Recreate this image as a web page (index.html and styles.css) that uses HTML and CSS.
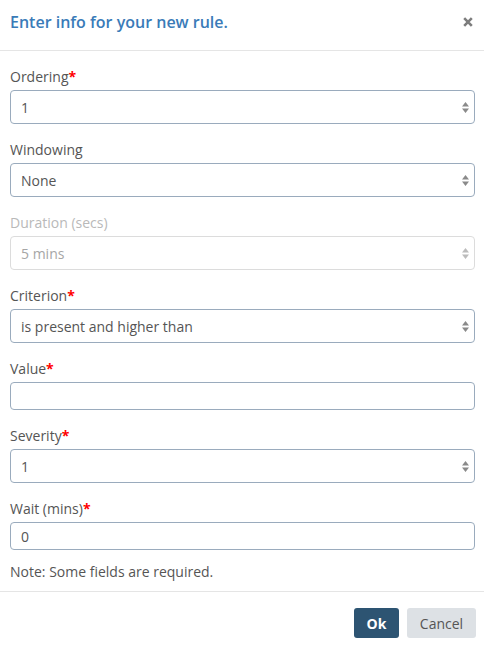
FILE: index.html
```html
<!DOCTYPE html>
<html>
<head>
<meta charset="utf-8">
<link rel="stylesheet" href="styles.css">
</head>
<body>
<div class="modal">
  <div class="modal-header">
    <h4 class="modal-title">Enter info for your new rule.</h4>
    <svg class="close" width="10" height="10" viewBox="0 0 10 10"><path d="M1.2 1.2 L8.8 8.8 M8.8 1.2 L1.2 8.8"/></svg>
  </div>
  <div class="modal-body">
    <div class="form-group">
      <label class="label">Ordering<span class="req">*</span></label>
      <div class="select-wrap">
        <select class="control select"><option>1</option></select>
        <svg class="arrows" width="7" height="11" viewBox="0 0 7 11"><path d="M3.5 0 L7 4.5 L0 4.5 Z M0 6.5 L7 6.5 L3.5 11 Z"/></svg>
      </div>
    </div>
    <div class="form-group">
      <label class="label">Windowing</label>
      <div class="select-wrap">
        <select class="control select"><option>None</option></select>
        <svg class="arrows" width="7" height="11" viewBox="0 0 7 11"><path d="M3.5 0 L7 4.5 L0 4.5 Z M0 6.5 L7 6.5 L3.5 11 Z"/></svg>
      </div>
    </div>
    <div class="form-group">
      <label class="label disabled">Duration (secs)</label>
      <div class="select-wrap disabled">
        <select class="control select" disabled><option>5 mins</option></select>
        <svg class="arrows" width="7" height="11" viewBox="0 0 7 11"><path d="M3.5 0 L7 4.5 L0 4.5 Z M0 6.5 L7 6.5 L3.5 11 Z"/></svg>
      </div>
    </div>
    <div class="form-group">
      <label class="label">Criterion<span class="req">*</span></label>
      <div class="select-wrap">
        <select class="control select"><option>is present and higher than</option></select>
        <svg class="arrows" width="7" height="11" viewBox="0 0 7 11"><path d="M3.5 0 L7 4.5 L0 4.5 Z M0 6.5 L7 6.5 L3.5 11 Z"/></svg>
      </div>
    </div>
    <div class="form-group">
      <label class="label">Value<span class="req">*</span></label>
      <input class="control text" type="text" value="">
    </div>
    <div class="form-group">
      <label class="label">Severity<span class="req">*</span></label>
      <div class="select-wrap">
        <select class="control select"><option>1</option></select>
        <svg class="arrows" width="7" height="11" viewBox="0 0 7 11"><path d="M3.5 0 L7 4.5 L0 4.5 Z M0 6.5 L7 6.5 L3.5 11 Z"/></svg>
      </div>
    </div>
    <div class="form-group last">
      <label class="label">Wait (mins)<span class="req">*</span></label>
      <input class="control text" type="text" value="0">
    </div>
    <p class="note">Note: Some fields are required.</p>
  </div>
  <div class="modal-footer">
    <button class="btn btn-primary">Ok</button>
    <button class="btn btn-default">Cancel</button>
  </div>
</div>
</body>
</html>
```

FILE: styles.css
```css
html, body {
  margin: 0;
  padding: 0;
  background: #ffffff;
}
body {
  font-family: "Open Sans", "Noto Sans", sans-serif;
  font-size: 14px;
  color: #555555;
  width: 484px;
}
.modal {
  width: 484px;
}
.modal-header {
  display: flex;
  align-items: center;
  justify-content: space-between;
  height: 51px;
  padding: 0 10px;
  box-sizing: border-box;
  border-bottom: 1px solid #e5e5e5;
}
.modal-title {
  margin: 0 0 6px 0;
  font-size: 16px;
  font-weight: 600;
  color: #3a7bb8;
}
.close {
  stroke: #7d7d7d;
  stroke-width: 2.6;
  margin: 0 1px 6px 0;
}
.modal-body {
  padding: 15px 9px 9px 10px;
}
.form-group {
  display: flex;
  flex-direction: column;
  margin-bottom: 15px;
}
.form-group.last {
  margin-bottom: 12px;
}
.label {
  line-height: 21px;
  margin-bottom: 3px;
  color: #555555;
}
.label.disabled {
  color: #b9b9b9;
}
.req {
  color: #ff0000;
  font-weight: bold;
}
.control {
  font-family: "Open Sans", "Noto Sans", sans-serif;
  font-size: 14px;
  color: #555555;
  border: 1px solid #9aabbd;
  border-radius: 4px;
  background: #ffffff;
  box-sizing: border-box;
  width: 100%;
  margin: 0;
  padding: 0 10px;
  outline: none;
}
.select {
  -webkit-appearance: none;
  appearance: none;
  height: 34px;
}
.text {
  height: 28px;
}
.select-wrap {
  position: relative;
}
.arrows {
  position: absolute;
  right: 6px;
  top: 12px;
  fill: #8a8a8a;
}
.select-wrap.disabled .select {
  border-color: #dcdcdc;
  color: #a6a6a6;
  background: #ffffff;
  opacity: 1;
}
.select-wrap.disabled .arrows {
  fill: #bcbcbc;
}
.note {
  margin: 0;
  line-height: 20px;
  font-size: 14px;
  color: #555555;
}
.modal-footer {
  display: flex;
  justify-content: flex-end;
  gap: 8px;
  border-top: 1px solid #e5e5e5;
  padding: 16px 8px 9px 0;
}
.btn {
  font-family: "Open Sans", "Noto Sans", sans-serif;
  font-size: 14px;
  height: 30px;
  border: none;
  border-radius: 3px;
  padding: 0;
  margin: 0;
}
.btn-primary {
  background: #2d5472;
  color: #ffffff;
  font-weight: bold;
  width: 45px;
}
.btn-default {
  background: #dde1e5;
  color: #555555;
  width: 69px;
}
```
